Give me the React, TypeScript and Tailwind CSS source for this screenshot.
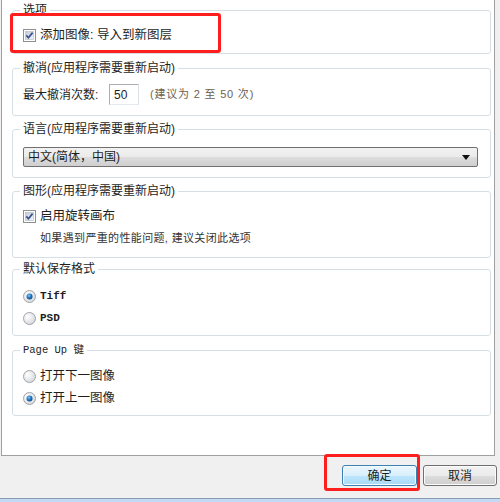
import type { ReactNode } from 'react'

const cjk = "font-['Liberation_Sans','Noto_Sans_CJK_SC',sans-serif]"
const mono = "font-['Liberation_Mono','Noto_Sans_CJK_SC',monospace]"

function CheckBox() {
  return (
    <svg width="13" height="13" viewBox="0 0 13 13" className="shrink-0">
      <defs>
        <linearGradient id="cbfill" x1="0" y1="0" x2="1" y2="1">
          <stop offset="0" stopColor="#c3cbd8" />
          <stop offset="1" stopColor="#f3f5f8" />
        </linearGradient>
      </defs>
      <rect x="0.5" y="0.5" width="12" height="12" fill="#fff" stroke="#8e8f8f" />
      <rect x="2.5" y="2.5" width="8" height="8" fill="url(#cbfill)" stroke="#aeb6c4" strokeWidth="0.6" />
      <path d="M3.3 6.4 L5.4 8.8 L9.6 3.6" fill="none" stroke="#3a4f92" strokeWidth="1.7" />
    </svg>
  )
}

function Radio({ checked }: { checked?: boolean }) {
  return (
    <svg width="13" height="13" viewBox="0 0 13 13" className="shrink-0">
      <defs>
        <radialGradient id="rbg" cx="0.35" cy="0.35" r="0.8">
          <stop offset="0" stopColor="#ffffff" />
          <stop offset="1" stopColor="#cfd2d6" />
        </radialGradient>
        <radialGradient id="rdot" cx="0.4" cy="0.35" r="0.7">
          <stop offset="0" stopColor="#7cc3f0" />
          <stop offset="0.6" stopColor="#1d6fb8" />
          <stop offset="1" stopColor="#0d4a86" />
        </radialGradient>
      </defs>
      <circle cx="6.5" cy="6.5" r="6" fill="url(#rbg)" stroke="#a0a3a8" />
      {checked && <circle cx="6.5" cy="6.5" r="3" fill="url(#rdot)" />}
    </svg>
  )
}

function Group({
  title,
  titleMono,
  className,
  children,
}: {
  title: ReactNode
  titleMono?: boolean
  className: string
  children?: ReactNode
}) {
  return (
    <div className={`relative w-[479px] border border-[#d5dfe5] rounded-[3px] pl-[10px] ${className}`}>
      <span
        className={`absolute left-[7px] -top-[8px] px-[3px] bg-white leading-[14px] text-[#1e1e1e] ${
          titleMono ? `${mono} text-[10.5px]` : 'text-[12px]'
        }`}
      >
        {title}
      </span>
      {children}
    </div>
  )
}

export default function App() {
  return (
    <div className={`relative w-[500px] h-[502px] overflow-hidden bg-[#f0f0f0] ${cjk} text-[#1e1e1e]`}>
      {/* white options panel */}
      <div className="ml-[1px] w-[494px] h-[456px] bg-white border-x border-b border-[#a0a0a0] flex flex-col pl-[10px]">
        <Group title="选项" className="mt-[10px] h-[44px] pt-[13px]">
          <div className="flex items-center h-[22px] gap-[4px] text-[12.5px]">
            <CheckBox />
            <span>添加图像: 导入到新图层</span>
          </div>
        </Group>

        <Group title="撤消(应用程序需要重新启动)" className="mt-[14px] h-[48px] pt-[15px]">
          <div className="flex items-center h-[21px] text-[12px]">
            <span className="w-[86px]">最大撤消次数:</span>
            <div className="w-[30px] h-[21px] border border-[#abadb3] border-b-[#e3e9ef] border-r-[#dbdfe6] flex items-center pl-[4px] text-[12px]">
              50
            </div>
            <span className="ml-[11px] text-[11px] tracking-[0.8px] text-[#6d6250]">(建议为 2 至 50 次)</span>
          </div>
        </Group>

        <Group title="语言(应用程序需要重新启动)" className="mt-[13px] h-[49px] pt-[17px]">
          <div className="relative w-[455px] h-[20px] rounded-[2px] border border-[#707070] bg-[linear-gradient(#f2f2f2_0%,#ebebeb_50%,#dddddd_51%,#cfcfcf_100%)] flex items-center pl-[4px] text-[12px]">
            中文(简体，中国)
            <svg width="8" height="5" viewBox="0 0 8 5" className="absolute right-[7px] top-[7px]">
              <path d="M0 0 H8 L4 5 Z" fill="#111" />
            </svg>
          </div>
        </Group>

        <Group title="图形(应用程序需要重新启动)" className="mt-[13px] h-[67px] pt-[13px]">
          <div className="flex items-center h-[22px] gap-[4px] text-[12.5px]">
            <CheckBox />
            <span>启用旋转画布</span>
          </div>
          <div className="flex items-center h-[22px] pl-[17px] text-[11px] tracking-[0.35px] text-[#333]">
            如果遇到严重的性能问题, 建议关闭此选项
          </div>
        </Group>

        <Group title="默认保存格式" className="mt-[11px] h-[67px] pt-[15px]">
          <div className={`flex items-center h-[22px] gap-[4px] ${mono} text-[11px] font-bold`}>
            <Radio checked />
            <span>Tiff</span>
          </div>
          <div className={`flex items-center h-[22px] gap-[4px] ${mono} text-[11px] font-bold`}>
            <Radio />
            <span>PSD</span>
          </div>
        </Group>

        <Group title="Page Up 键" titleMono className="mt-[14px] h-[66px] pt-[14px]">
          <div className="flex items-center h-[22px] gap-[4px] text-[12.5px]">
            <Radio />
            <span>打开下一图像</span>
          </div>
          <div className="flex items-center h-[22px] gap-[4px] text-[12.5px]">
            <Radio checked />
            <span>打开上一图像</span>
          </div>
        </Group>
      </div>

      {/* dialog buttons */}
      <div className="flex justify-end gap-[6px] pr-[3px] mt-[9px]">
        <button className="w-[75px] h-[21px] rounded-[3px] border border-[#3c7fb1] bg-[linear-gradient(#eaf6fd_0%,#d9f0fc_50%,#bee6fd_51%,#a7d9f5_100%)] text-[12px] shadow-[inset_0_0_0_1px_#f4fbff]">
          确定
        </button>
        <button className="w-[74px] h-[21px] rounded-[3px] border border-[#707070] bg-[linear-gradient(#f2f2f2_0%,#ebebeb_50%,#dddddd_51%,#cfcfcf_100%)] text-[12px] shadow-[inset_0_0_0_1px_#fbfbfb]">
          取消
        </button>
      </div>

      {/* taskbar strip */}
      <div className="absolute left-0 bottom-0 w-[500px] h-[4px] border-t border-[#8a9bb0] bg-[#c3daf5]" />

      {/* red highlight boxes */}
      <div className="absolute left-[10px] top-[13px] w-[211px] h-[40px] border-[3px] border-[#ff1e1e] rounded-[3px]" />
      <div className="absolute left-[324px] top-[454px] w-[96px] h-[37px] border-[3px] border-[#ff1e1e] rounded-[3px]" />
    </div>
  )
}
